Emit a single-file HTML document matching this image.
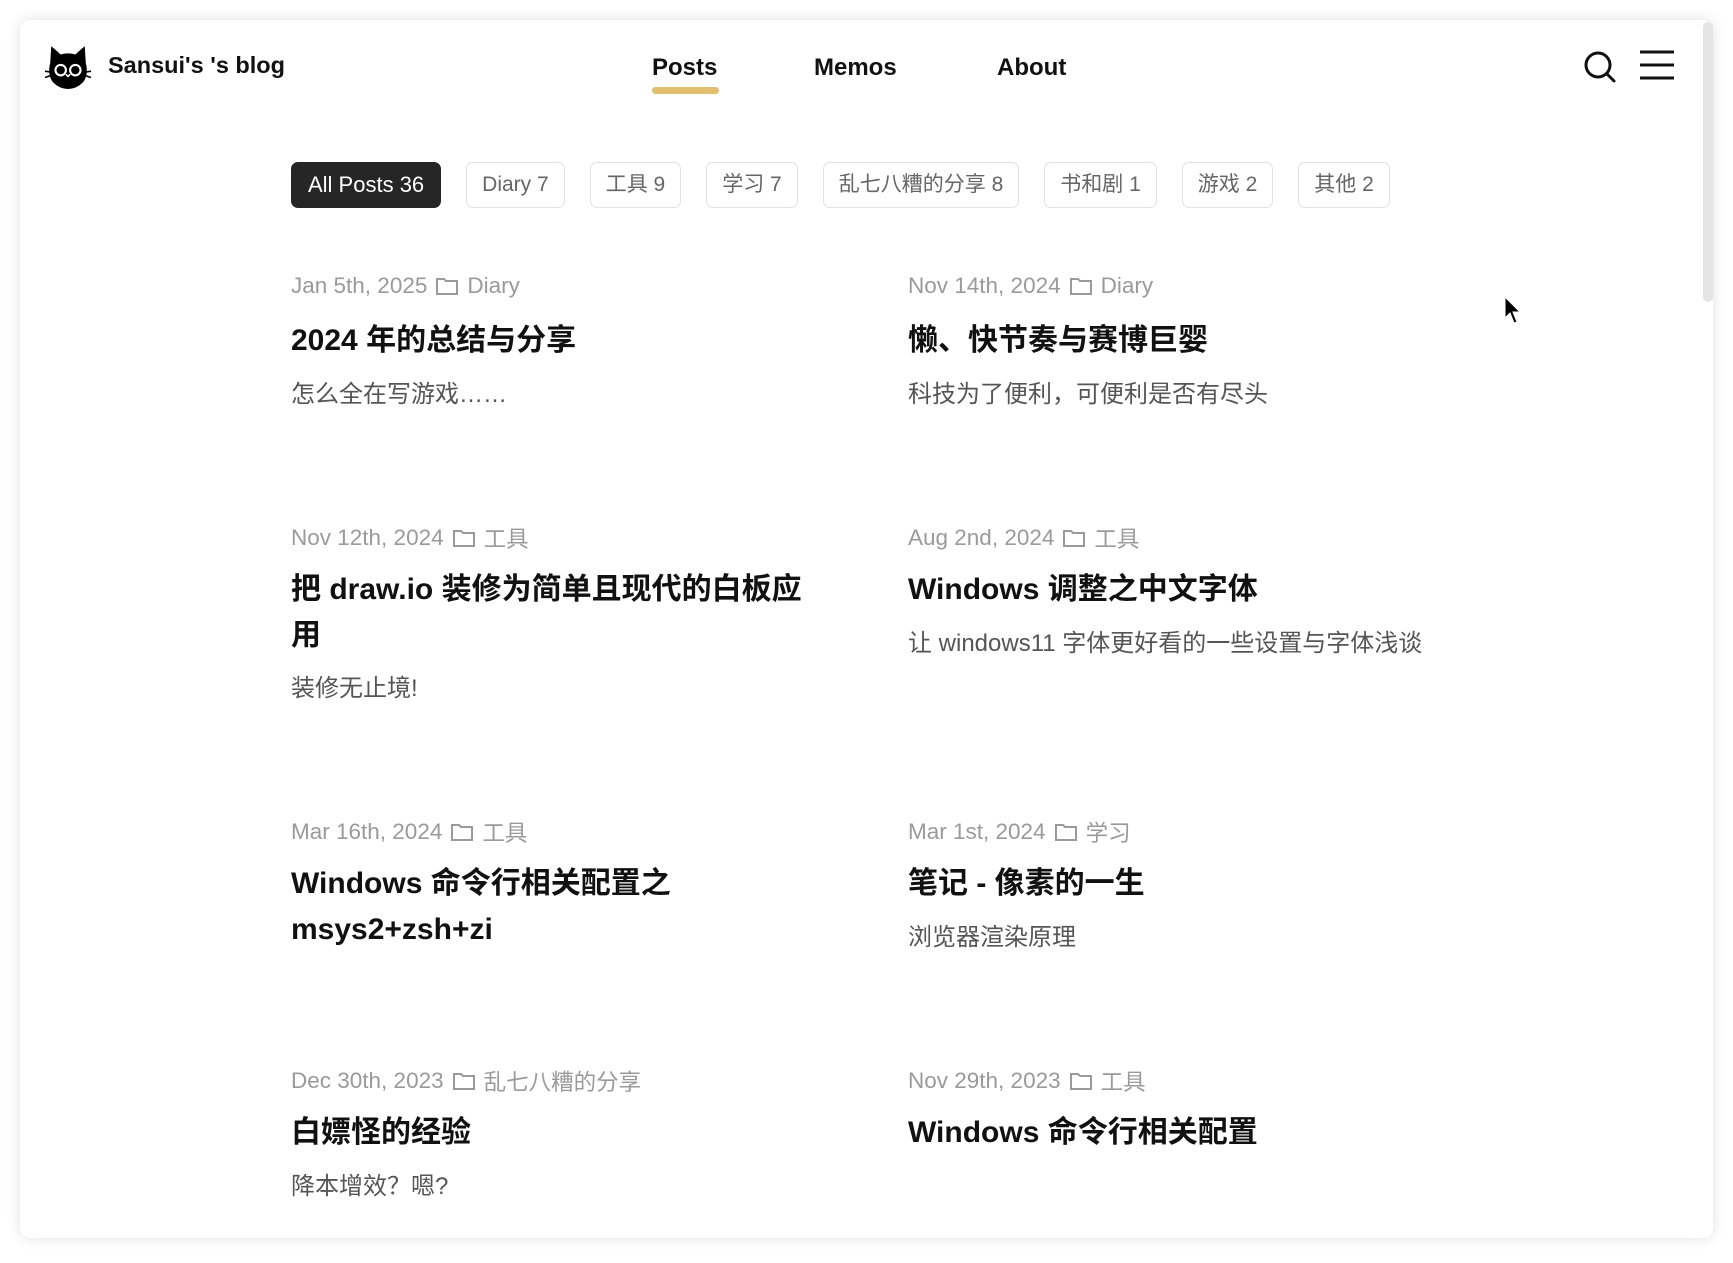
<!DOCTYPE html>
<html><head><meta charset="utf-8"><style>
*{margin:0;padding:0;box-sizing:border-box}
body{width:1733px;height:1263px;background:#fff;position:relative;overflow:hidden;font-family:"Liberation Sans","Noto Sans CJK SC",sans-serif}
.card{position:absolute;left:20px;top:20px;width:1693px;height:1218px;background:#fff;border-radius:10px;box-shadow:0 0 14px rgba(0,0,0,.12)}
.sb{position:absolute;left:1703px;top:22px;width:10px;height:280px;background:#e4e4e4;border-radius:5px}
.abs{position:absolute;white-space:nowrap}
.nav{font-size:24px;font-weight:700;color:#111;top:54px}
.tags{position:absolute;left:291px;top:162px;display:flex;gap:25px}
.tag{height:46px;line-height:44px;padding:0 15px;border:1.5px solid #e2e2e2;border-radius:7px;font-size:21px;color:#666}
.tag.on{background:#262626;color:#fff;border-color:#262626;padding:0 16px;font-size:22px}
.date{font-size:22.5px;color:#9a9a9a;display:flex;align-items:center;gap:8px}
.title{font-size:30px;font-weight:700;color:#111;line-height:46px}
.desc{font-size:24px;color:#555}
</style></head><body>
<div class="card"></div>
<div class="sb"></div>
<svg class="abs" style="left:44px;top:44px" width="48" height="46" viewBox="0 0 44 44">
<path d="M5 18 L6 2 L15 10 Q22 8 29 10 L38 2 L39 18 Q42 30 36 37 Q30 43 22 43 Q14 43 8 37 Q2 30 5 18Z" fill="#000"/>
<circle cx="15" cy="25" r="5" fill="none" stroke="#fff" stroke-width="2"/><circle cx="29" cy="25" r="5" fill="none" stroke="#fff" stroke-width="2"/>
<path d="M20 29 L22 31 L24 29" stroke="#fff" stroke-width="1.5" fill="none"/>
<path d="M0 26 L6 27 M0 32 L6 30 M44 26 L38 27 M44 32 L38 30" stroke="#000" stroke-width="1.5"/>
</svg>
<div class="abs" style="left:108px;top:52px;font-size:23.5px;font-weight:700;color:#111">Sansui's 's blog</div>
<div class="abs" style="left:652px;top:87px;width:67px;height:7px;background:#e0c070;border-radius:4px"></div>
<div class="abs nav" style="left:652px">Posts</div>
<div class="abs nav" style="left:814px">Memos</div>
<div class="abs nav" style="left:997px">About</div>
<svg class="abs" style="left:1583px;top:50px" width="34" height="34" viewBox="0 0 34 34"><circle cx="15" cy="15" r="12" fill="none" stroke="#111" stroke-width="3"/><path d="M24 24 L31 31" stroke="#111" stroke-width="3" stroke-linecap="round"/></svg>
<svg class="abs" style="left:1639px;top:50px" width="36" height="32" viewBox="0 0 36 32"><path d="M1 2H35M1 15H35M1 28H35" stroke="#111" stroke-width="3"/></svg>
<div class="tags">
<div class="tag on">All Posts 36</div><div class="tag">Diary 7</div><div class="tag">工具 9</div><div class="tag">学习 7</div><div class="tag">乱七八糟的分享 8</div><div class="tag">书和剧 1</div><div class="tag">游戏 2</div><div class="tag">其他 2</div>
</div>

<div class="abs date" style="left:291px;top:273px">Jan 5th, 2025 <svg width="24" height="20" viewBox="0 0 24 20"><path d="M2 3h7l2 2h11v13H2z" fill="none" stroke="#9a9a9a" stroke-width="2"/></svg>Diary</div>
<div class="abs title" style="left:291px;top:318px">2024 年的总结与分享</div>
<div class="abs desc" style="left:291px;top:374px">怎么全在写游戏……</div>
<div class="abs date" style="left:908px;top:273px">Nov 14th, 2024 <svg width="24" height="20" viewBox="0 0 24 20"><path d="M2 3h7l2 2h11v13H2z" fill="none" stroke="#9a9a9a" stroke-width="2"/></svg>Diary</div>
<div class="abs title" style="left:908px;top:318px">懒、快节奏与赛博巨婴</div>
<div class="abs desc" style="left:908px;top:374px">科技为了便利，可便利是否有尽头</div>

<div class="abs date" style="left:291px;top:522px">Nov 12th, 2024 <svg width="24" height="20" viewBox="0 0 24 20"><path d="M2 3h7l2 2h11v13H2z" fill="none" stroke="#9a9a9a" stroke-width="2"/></svg>工具</div>
<div class="abs title" style="left:291px;top:567px">把 draw.io 装修为简单且现代的白板应<br>用</div>
<div class="abs desc" style="left:291px;top:668px">装修无止境!</div>
<div class="abs date" style="left:908px;top:522px">Aug 2nd, 2024 <svg width="24" height="20" viewBox="0 0 24 20"><path d="M2 3h7l2 2h11v13H2z" fill="none" stroke="#9a9a9a" stroke-width="2"/></svg>工具</div>
<div class="abs title" style="left:908px;top:567px">Windows 调整之中文字体</div>
<div class="abs desc" style="left:908px;top:623px">让 windows11 字体更好看的一些设置与字体浅谈</div>

<div class="abs date" style="left:291px;top:816px">Mar 16th, 2024 <svg width="24" height="20" viewBox="0 0 24 20"><path d="M2 3h7l2 2h11v13H2z" fill="none" stroke="#9a9a9a" stroke-width="2"/></svg>工具</div>
<div class="abs title" style="left:291px;top:861px">Windows 命令行相关配置之<br>msys2+zsh+zi</div>
<div class="abs date" style="left:908px;top:816px">Mar 1st, 2024 <svg width="24" height="20" viewBox="0 0 24 20"><path d="M2 3h7l2 2h11v13H2z" fill="none" stroke="#9a9a9a" stroke-width="2"/></svg>学习</div>
<div class="abs title" style="left:908px;top:861px">笔记 - 像素的一生</div>
<div class="abs desc" style="left:908px;top:917px">浏览器渲染原理</div>

<div class="abs date" style="left:291px;top:1065px">Dec 30th, 2023 <svg width="24" height="20" viewBox="0 0 24 20"><path d="M2 3h7l2 2h11v13H2z" fill="none" stroke="#9a9a9a" stroke-width="2"/></svg>乱七八糟的分享</div>
<div class="abs title" style="left:291px;top:1110px">白嫖怪的经验</div>
<div class="abs desc" style="left:291px;top:1166px">降本增效？嗯?</div>
<div class="abs date" style="left:908px;top:1065px">Nov 29th, 2023 <svg width="24" height="20" viewBox="0 0 24 20"><path d="M2 3h7l2 2h11v13H2z" fill="none" stroke="#9a9a9a" stroke-width="2"/></svg>工具</div>
<div class="abs title" style="left:908px;top:1110px">Windows 命令行相关配置</div>
<svg class="abs" style="left:1504px;top:296px" width="18" height="30" viewBox="0 0 18 30"><path d="M1 1 L1 22 L6 17 L10 27 L13 26 L9 16 L16 16Z" fill="#000" stroke="#fff" stroke-width="1"/></svg>
</body></html>
